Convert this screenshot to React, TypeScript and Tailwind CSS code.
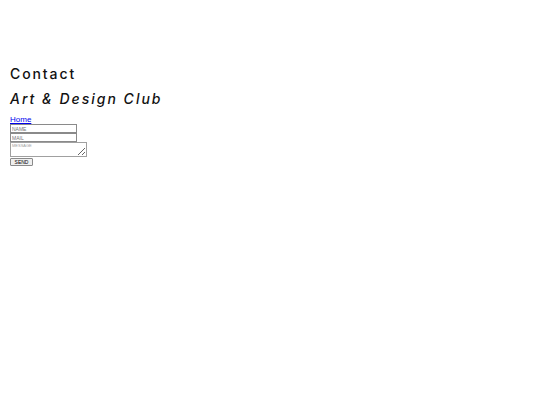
import React from 'react';

export default function App() {
  return (
    <div className="min-h-[405px] w-[540px] bg-white px-[10px] pt-[66px] font-['Liberation_Sans',Arial,sans-serif]">
      <h1 className="font-['Inter',sans-serif] text-[14px] font-medium leading-[16px] tracking-[1.9px] text-[#111]">
        Contact
      </h1>
      <h2 className="mt-[9px] font-['Inter',sans-serif] text-[14px] font-medium italic leading-[16px] tracking-[2px] text-[#111]">
        Art &amp; Design Club
      </h2>
      <form className="mt-[8px] flex flex-col items-start" onSubmit={(e) => e.preventDefault()}>
        <a href="#" className="text-[8px] leading-[9px] text-[#0000ee] underline">
          Home
        </a>
        <input
          type="text"
          placeholder="NAME"
          className="box-border h-[9px] w-[67px] border border-[#8a8a8a] px-[1px] text-[5px] leading-[7px] placeholder:text-[#757575]"
        />
        <input
          type="text"
          placeholder="MAIL"
          className="box-border h-[9px] w-[67px] border border-[#8a8a8a] px-[1px] text-[5px] leading-[7px] placeholder:text-[#757575]"
        />
        <textarea
          placeholder="MESSAGE"
          className="box-border h-[15px] w-[77px] border border-[#a0a0a0] px-[1px] text-[4px] leading-[6px] placeholder:text-[#a0a0a0]"
        />
        <button
          type="submit"
          className="mt-[1px] box-border h-[8px] w-[23px] rounded-[1px] border border-[#8a8a8a] bg-[#efefef] text-[5px] leading-[6px] text-black"
        >
          SEND
        </button>
      </form>
    </div>
  );
}
